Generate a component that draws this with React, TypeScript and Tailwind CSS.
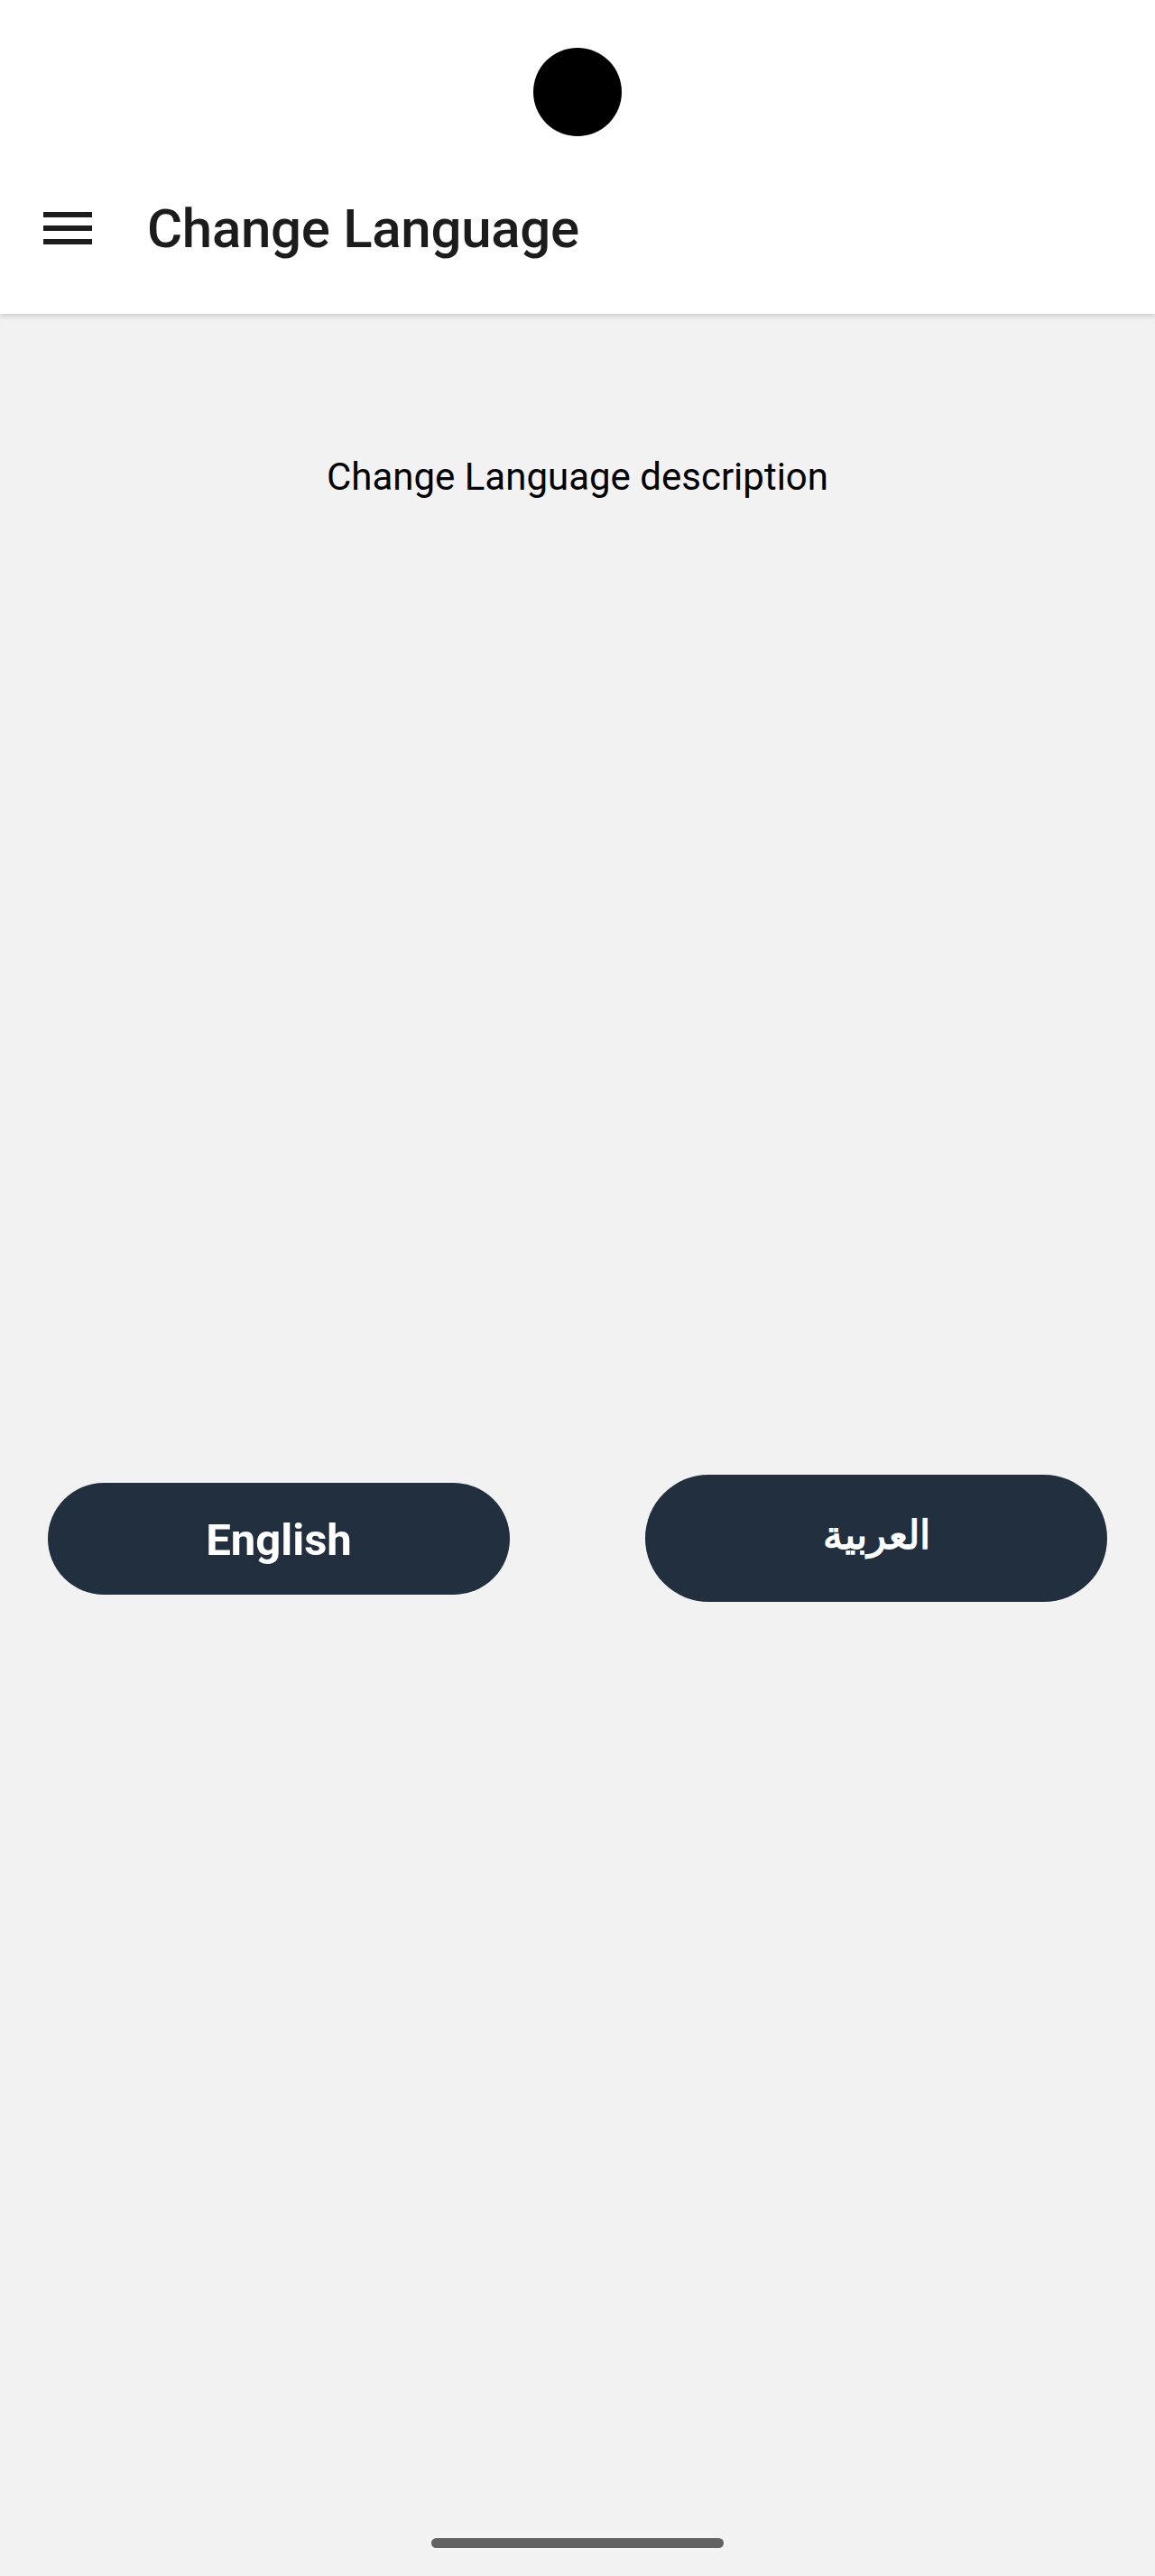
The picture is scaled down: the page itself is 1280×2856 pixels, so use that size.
export default function App() {
  return (
    <div
      className="h-[2856px] w-full bg-[#f2f2f2] flex flex-col overflow-hidden"
      style={{ fontFamily: 'Roboto, "Noto Sans", sans-serif' }}
    >
      <header className="h-[348px] shrink-0 bg-white shadow-[0_2px_6px_rgba(0,0,0,0.18)] relative z-10">
        <div className="pt-[53px] flex justify-center">
          <div className="w-[98px] h-[98px] rounded-full bg-black" />
        </div>
        <div className="mt-[67px] h-[72px] flex items-center pl-[48px]">
          <div className="w-[54px] flex flex-col gap-[9px] -mt-[2px]">
            <span className="block h-[6px] bg-[#1c1c1c]" />
            <span className="block h-[6px] bg-[#1c1c1c]" />
            <span className="block h-[6px] bg-[#1c1c1c]" />
          </div>
          <h1 className="ml-[61px] text-[60px] leading-[72px] font-medium text-[#1c1c1c] tracking-[-0.3px]">
            Change Language
          </h1>
        </div>
      </header>

      <p className="mt-[156px] text-center text-[42px] leading-[50px] text-black">
        Change Language description
      </p>

      <div className="mt-[1081px] px-[53px] flex items-center justify-between">
        <button className="w-[512px] h-[124px] rounded-full bg-[#222f3e] text-white text-[49px] font-bold flex items-center justify-center pt-[4px]">
          English
        </button>
        <button
          className="w-[512px] h-[141px] rounded-full bg-[#222f3e] text-white text-[44px] font-semibold flex items-center justify-center pb-[8px]"
          dir="rtl"
        >
          العربية
        </button>
      </div>

      <div className="mt-auto mb-[31px] flex justify-center">
        <div className="w-[324px] h-[11px] rounded-full bg-[#626262]" />
      </div>
    </div>
  );
}
